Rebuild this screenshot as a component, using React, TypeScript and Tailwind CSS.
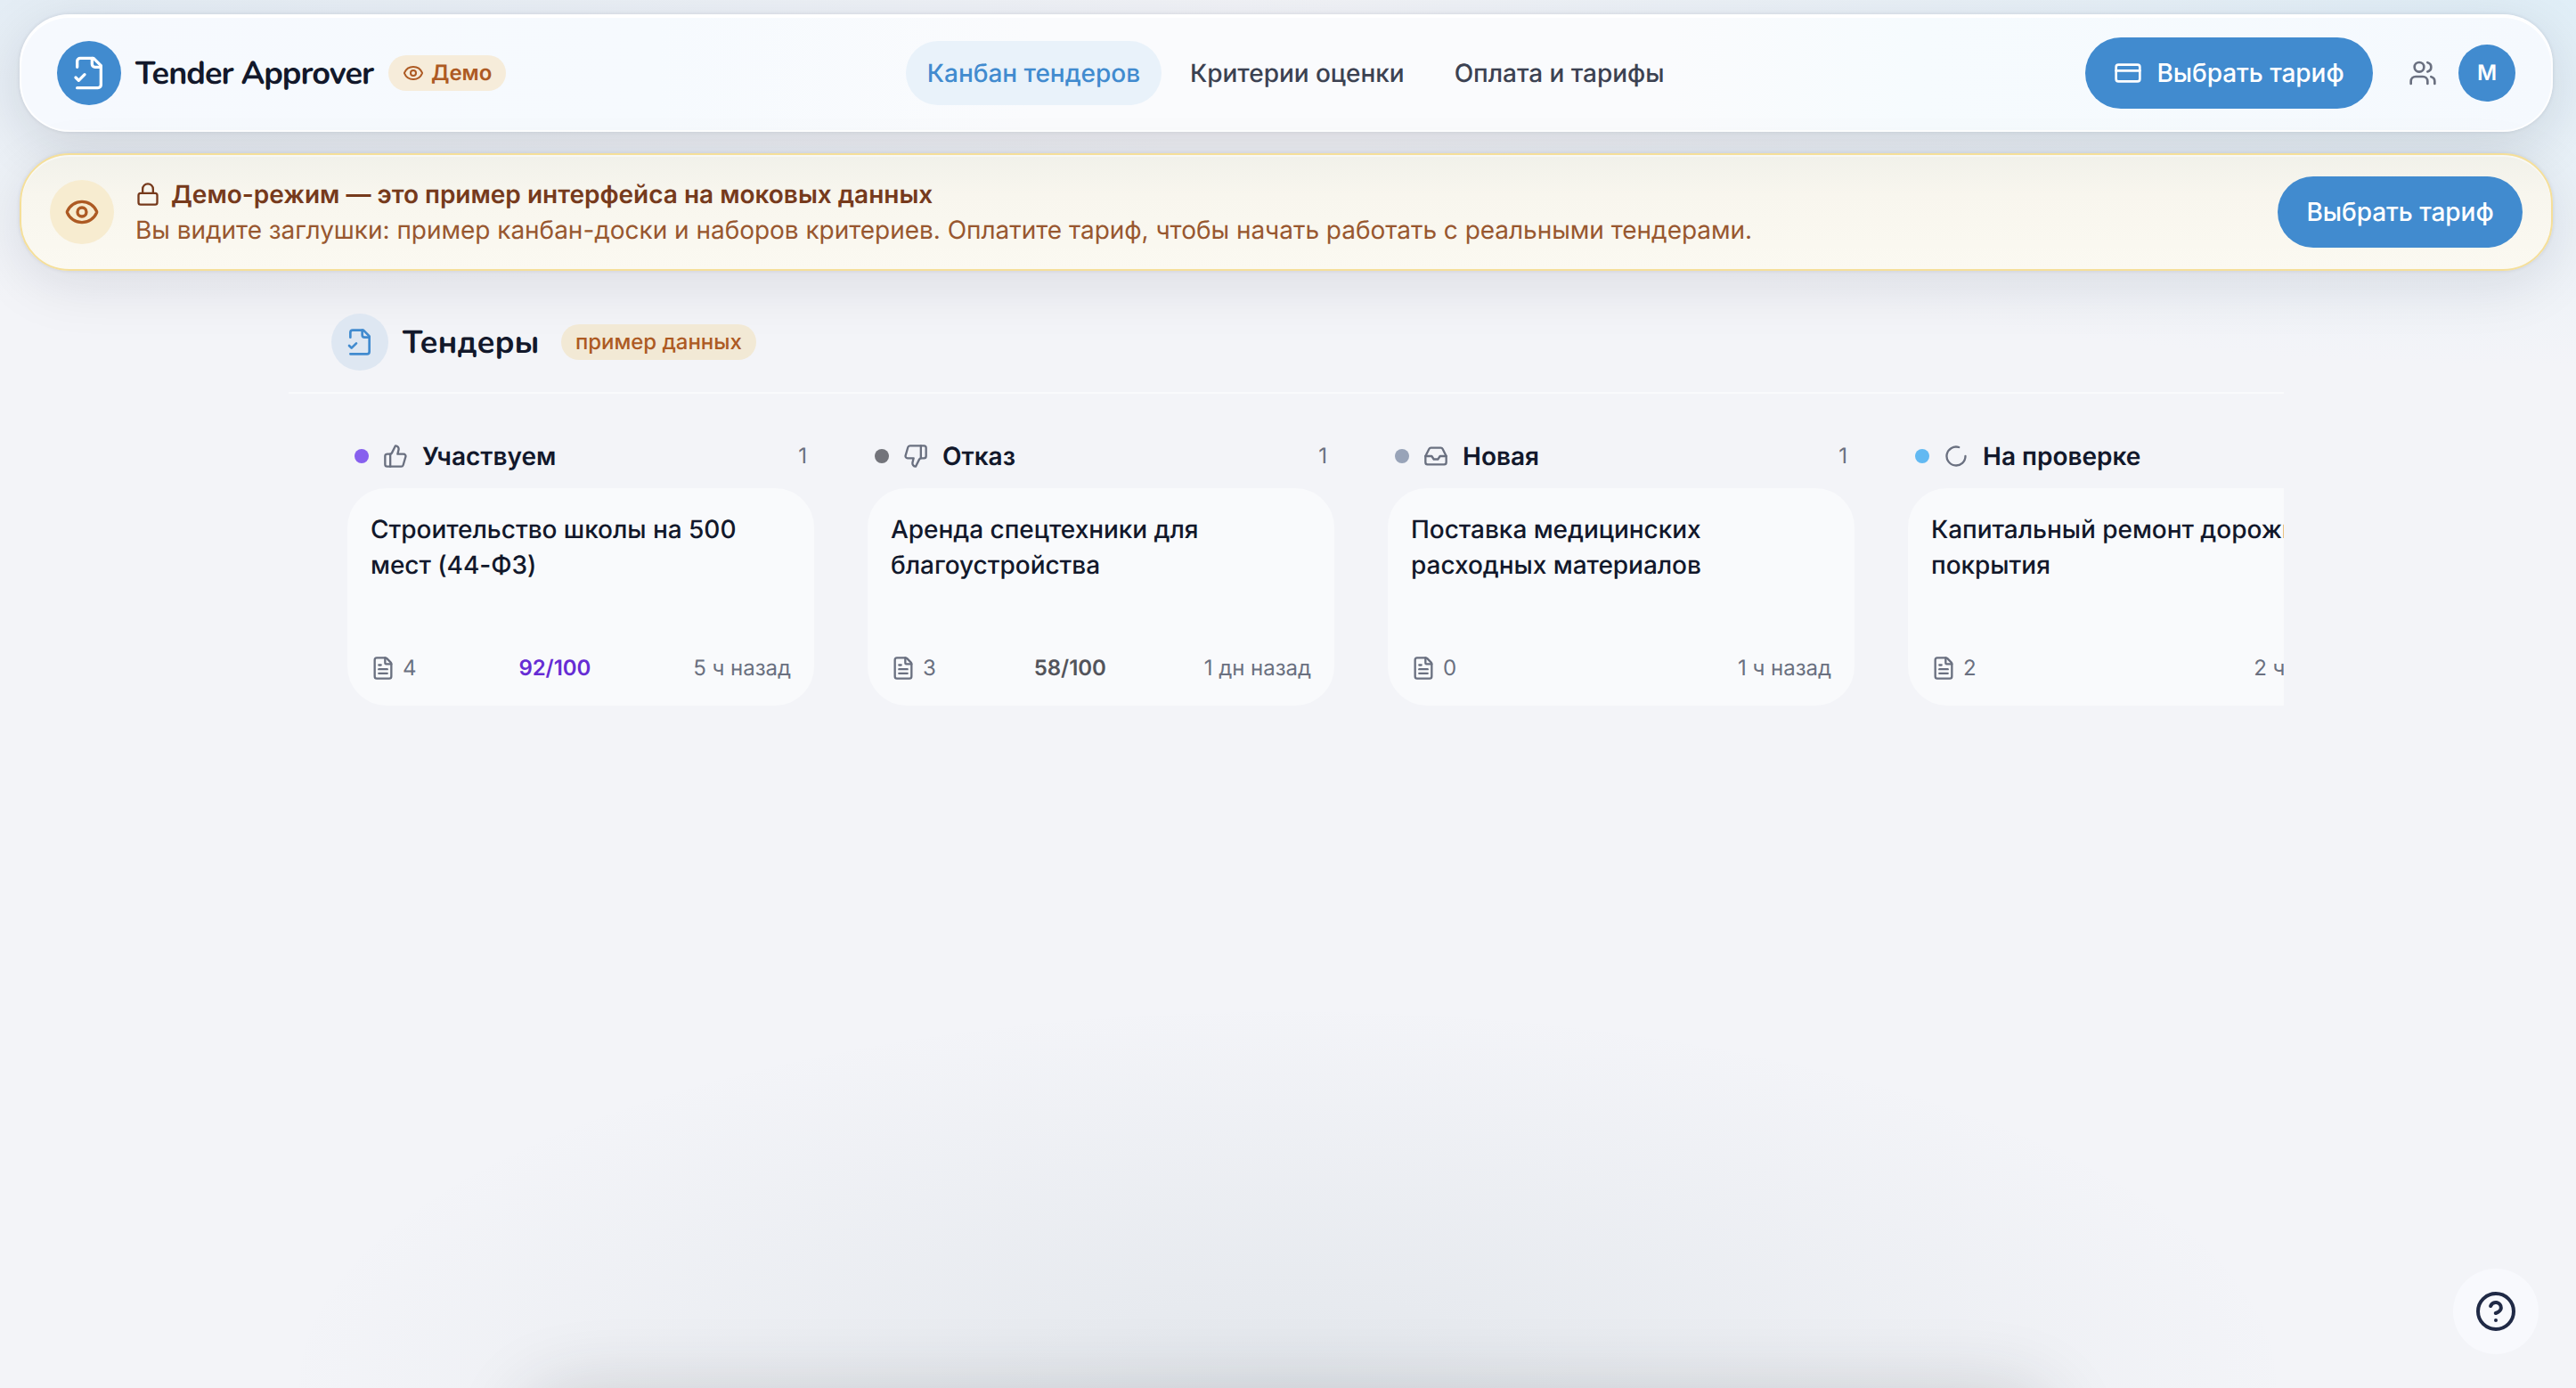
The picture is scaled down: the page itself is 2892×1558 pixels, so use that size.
import React from 'react';
import {
  CircleQuestionMark,
  CreditCard,
  Eye,
  FileText,
  Inbox,
  LoaderCircle,
  Lock,
  ThumbsDown,
  ThumbsUp,
  Users,
  type LucideIcon,
} from 'lucide-react';

interface Tender {
  title: string;
  files: number;
  score?: string;
  scoreColor?: string;
  ago: string;
}

interface Column {
  name: string;
  dot: string;
  icon: LucideIcon;
  tender: Tender;
}

const navItems = ['Канбан тендеров', 'Критерии оценки', 'Оплата и тарифы'];

const columns: Column[] = [
  {
    name: 'Участвуем',
    dot: 'bg-[#8760ee]',
    icon: ThumbsUp,
    tender: { title: 'Строительство школы на 500 мест (44-ФЗ)', files: 4, score: '92/100', scoreColor: 'text-[#662cd4]', ago: '5 ч назад' },
  },
  {
    name: 'Отказ',
    dot: 'bg-[#73747b]',
    icon: ThumbsDown,
    tender: { title: 'Аренда спецтехники для благоустройства', files: 3, score: '58/100', scoreColor: 'text-[#53545b]', ago: '1 дн назад' },
  },
  {
    name: 'Новая',
    dot: 'bg-[#98a3b8]',
    icon: Inbox,
    tender: { title: 'Поставка медицинских расходных материалов', files: 0, ago: '1 ч назад' },
  },
  {
    name: 'На проверке',
    dot: 'bg-[#62b9f2]',
    icon: LoaderCircle,
    tender: { title: 'Капитальный ремонт дорожного покрытия', files: 2, ago: '2 ч назад' },
  },
];

// file with the check mark on the left edge
const LogoIcon: React.FC<{ className: string }> = ({ className }) => {
  return (
    <svg viewBox="0 0 24 24" fill="none" stroke="currentColor" strokeWidth={2} strokeLinecap="round" strokeLinejoin="round" className={className}>
      <path d="M4 22h14a2 2 0 0 0 2-2V7l-5-5H6a2 2 0 0 0-2 2v4" />
      <path d="M14 2v4a2 2 0 0 0 2 2h4" />
      <path d="m3 15 2 2 4-4" />
    </svg>
  );
};

const TenderCard: React.FC<{ tender: Tender }> = ({ tender }) => {
  return (
    <div className="flex h-[244px] flex-col justify-between rounded-[44px] bg-[#f9fafc] p-[26px]">
      <p className="text-[28px] leading-10 font-medium text-[#12182b]">{tender.title}</p>
      <div className="flex items-center justify-between text-2xl leading-8 text-[#6a7080]">
        <span className="flex items-center gap-2">
          <FileText size={28} />
          {tender.files}
        </span>
        {tender.score && <span className={`font-semibold ${tender.scoreColor}`}>{tender.score}</span>}
        <span>{tender.ago}</span>
      </div>
    </div>
  );
};

const BoardColumn: React.FC<{ column: Column }> = ({ column }) => {
  const Icon = column.icon;
  return (
    <section className="w-[524px] shrink-0">
      <div className="flex h-10 items-center px-2">
        <span className={`size-4 rounded-full ${column.dot}`} />
        <Icon size={28} className="ml-4 text-[#6a7080]" />
        <h2 className="ml-4 text-[28px] font-semibold tracking-normal text-[#12182b]">{column.name}</h2>
        <span className="ml-auto text-2xl text-[#6a7080]">1</span>
      </div>
      <div className="mt-4">
        <TenderCard tender={column.tender} />
      </div>
    </section>
  );
};

const Header: React.FC = () => {
  return (
    <header className="flex h-[132px] items-center justify-between rounded-[56px] border-2 border-white/90 bg-[linear-gradient(90deg,#f6f9fe_0%,#f6fafe_25%,#fafbfd_40%,#fafbfd_65%,#f6fbfe_75%,#f5f9fe_100%)] px-10 shadow-[0_0_4px_rgba(15,23,42,0.10),0_16px_64px_rgba(15,23,42,0.12),inset_0_2px_0_#fff]">
      <div className="flex items-center">
        <span className="flex size-[72px] items-center justify-center rounded-full bg-[#418bcf] text-white">
          <LogoIcon className="size-10" />
        </span>
        <span className="ml-4 w-[284px] pt-0.5 font-[Nunito,Lato,sans-serif] text-[36px] font-bold tracking-[-0.96px] whitespace-nowrap text-[#12182b]">
          Tender Approver
        </span>
        <span className="flex h-10 items-center gap-2 rounded-full bg-[#f6ecda] px-4 text-2xl font-semibold text-[#ad5a23]">
          <Eye size={24} />
          Демо
        </span>
      </div>
      <nav className="flex gap-2 text-[28px] font-medium text-[#3c4252]">
        {navItems.map((item, i) => (
          <a
            key={item}
            className={i === 0 ? 'flex h-[72px] items-center rounded-full bg-[#e9f2fa] px-6 text-[#418bcf]' : 'flex h-[72px] items-center px-6'}
          >
            {item}
          </a>
        ))}
      </nav>
      <div className="flex items-center">
        <button className="flex h-20 w-[323px] items-center justify-center gap-4 rounded-full bg-[#418bcf] text-[28px] font-medium text-white">
          <CreditCard size={32} />
          Выбрать тариф
        </button>
        <Users size={32} className="ml-10 text-[#6a7080]" />
        <span className="ml-6 flex size-16 items-center justify-center rounded-full bg-[#418bcf] text-2xl font-semibold text-white">M</span>
      </div>
    </header>
  );
};

const DemoBanner: React.FC = () => {
  return (
    <div className="mt-6 flex h-[132px] items-center rounded-[56px] border-2 border-[#f5df99] bg-[linear-gradient(180deg,#f1f1ea_0%,#f8f6ee_35%,#fbf9f1_100%)] px-8 shadow-[0_0_4px_rgba(15,23,42,0.10),0_16px_64px_rgba(15,23,42,0.10),inset_0_2px_0_rgba(255,255,255,0.5)]">
      <span className="flex size-[72px] items-center justify-center rounded-full bg-[#f7ecd0] text-[#ad5a23]">
        <Eye size={40} />
      </span>
      <div className="ml-6 text-[28px] leading-10">
        <p className="flex items-center gap-3 font-semibold tracking-[-0.01px] text-[#763a1c]">
          <Lock size={28} />
          Демо-режим — это пример интерфейса на моковых данных
        </p>
        <p className="tracking-[-0.03px] text-[#98572f]">
          Вы видите заглушки: пример канбан-доски и наборов критериев. Оплатите тариф, чтобы начать работать с реальными тендерами.
        </p>
      </div>
      <button className="ml-auto h-20 w-[275px] rounded-full bg-[#418bcf] text-[28px] font-medium text-white">Выбрать тариф</button>
    </div>
  );
};

const App: React.FC = () => {
  return (
    <div className="relative h-[1558px] overflow-hidden bg-[#f3f4f8] bg-[radial-gradient(1130px_430px_at_50%_100%,rgba(105,130,145,0.115),transparent),radial-gradient(1500px_340px_at_0%_0%,#e4edf5,transparent),radial-gradient(1500px_410px_at_100%_0%,#e0eef7,transparent)] font-[Inter,sans-serif] tracking-[-0.035px] [text-rendering:geometricPrecision]">
      <div className="pt-4 pr-[26px] pl-[22px]">
        <Header />
        <DemoBanner />
      </div>

      <main className="ml-[324px] w-[2240px] overflow-hidden">
        <div className="flex h-[138px] items-center border-b-2 border-[#f9fafc] px-12 pt-6">
          <span className="flex size-16 items-center justify-center rounded-full bg-[#dee7f2] text-[#418bcf]">
            <LogoIcon className="size-8" />
          </span>
          <h1 className="ml-4 w-[178px] pt-0.5 font-[Nunito,Lato,sans-serif] text-[36px] font-bold whitespace-nowrap text-[#12182b]">Тендеры</h1>
          <span className="flex h-10 items-center rounded-full bg-[#f2e9d5] px-4 text-2xl font-medium text-[#ad5a23]">пример данных</span>
        </div>
        <div className="flex gap-[60px] pt-[50px] pl-[66px]">
          {columns.map((column) => (
            <BoardColumn key={column.name} column={column} />
          ))}
        </div>
      </main>

      {/* shadow of the dock hidden below the fold */}
      <div className="absolute top-[1574px] left-[600px] h-24 w-[1692px] rounded-[40px] shadow-[0_0_88px_8px_rgba(40,45,50,0.2)]" />

      <button className="absolute top-[1424px] left-[2754px] flex size-24 items-center justify-center rounded-full bg-[#f8f9fd] text-[#202a46]">
        <CircleQuestionMark size={48} />
      </button>
    </div>
  );
};

export default App;
